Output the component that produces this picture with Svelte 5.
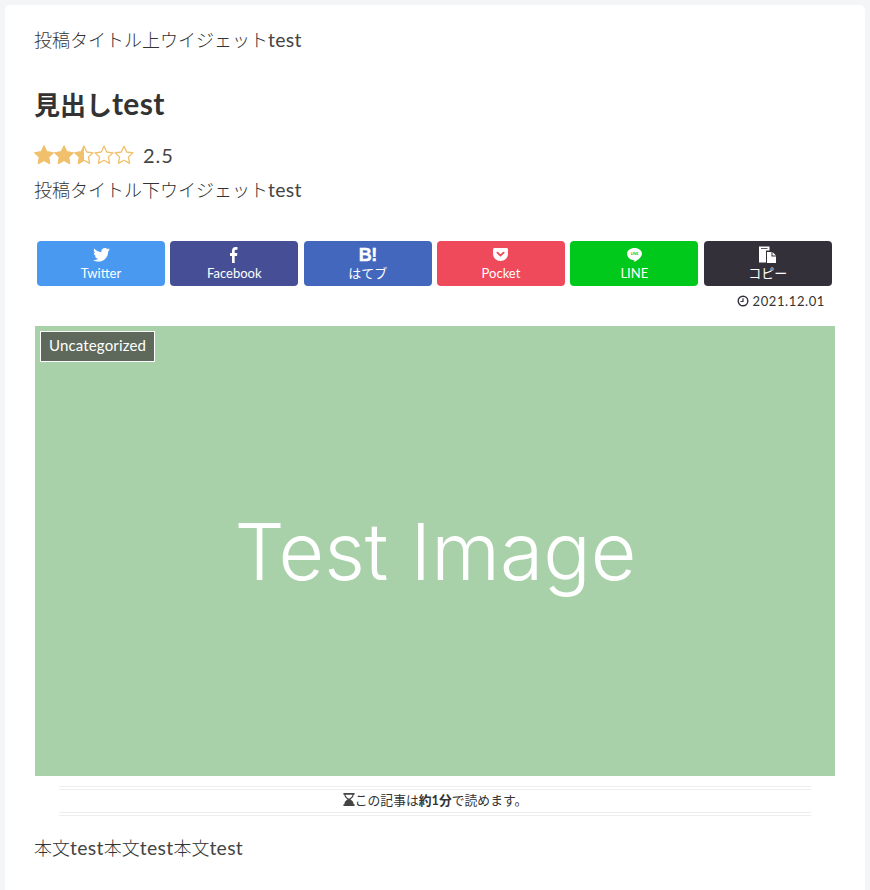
<script>
  const stars = [1, 1, 0.5, 0, 0];
  const starPath = "M10 1.2l2.7 5.8 6.3.8-4.6 4.3 1.2 6.3L10 15.3l-5.6 3.1 1.2-6.3L1 7.8l6.3-.8z";
</script>

<div class="page">
  <main class="card">
    <p class="widget top">投稿タイトル上ウイジェット<span class="lat">test</span></p>
    <h1>見出し<span class="lat">test</span></h1>
    <div class="rating">
      <span class="stars">
        {#each stars as s, i}
          <svg viewBox="0 0 20 20" width="20" height="20">
            <defs>
              <clipPath id={"half" + i}><rect x="0" y="0" width={20 * s} height="20" /></clipPath>
            </defs>
            <path d={starPath} fill="none" stroke="#f0c06c" stroke-width="1.3" stroke-linejoin="round" />
            <path d={starPath} fill="#f0c06c" stroke="#f0c06c" stroke-width="1.3" stroke-linejoin="round" clip-path={"url(#half" + i + ")"} />
          </svg>
        {/each}
      </span>
      <span class="score">2.5</span>
    </div>
    <p class="widget below">投稿タイトル下ウイジェット<span class="lat">test</span></p>

    <div class="share">
      <a class="btn twitter">
        <span class="icon">
          <svg viewBox="0 0 24 20" width="17" height="14"><path fill="#fff" d="M21.5 5c0 .2 0 .4 0 .6C21.500 12 16.600 19.400 7.600 19.400c-2.800 0-5.300-.8-7.600-2.200.4 0 .8.100 1.200.100 2.300 0 4.400-.8 6.100-2.100-2.200 0-4-1.500-4.600-3.400.3 0 .6.100.9.100.4 0 .9-.1 1.300-.2C2.700 11.200 1 9.200 1 6.800v-.1c.7.400 1.400.6 2.200.6C1.900 6.400 1 4.900 1 3.200c0-.9.200-1.700.7-2.500C4.100 3.700 7.800 5.700 11.900 5.900c-.1-.4-.1-.7-.1-1.100C11.800 2.100 14 0 16.700 0c1.400 0 2.700.6 3.600 1.500 1.100-.2 2.200-.6 3.100-1.200-.4 1.200-1.100 2.100-2.200 2.700 1-.1 2-.4 2.800-.8-.7 1-1.500 1.800-2.500 2.800z" /></svg>
        </span>
        <span class="label">Twitter</span>
      </a>
      <a class="btn facebook">
        <span class="icon">
          <svg viewBox="0 0 10 18" width="8" height="16" preserveAspectRatio="none"><path fill="#fff" d="M9.300.1v3H7.500c-1.400 0-1.600.7-1.600 1.600v2.100h3.300l-.4 3.400H5.900V18H2.500v-7.800H0V6.800h2.500V4.300C2.500 1.500 4.300 0 6.800 0c1.200 0 2 .1 2.500.1z" /></svg>
        </span>
        <span class="label">Facebook</span>
      </a>
      <a class="btn hatena">
        <span class="icon hb">B!</span>
        <span class="label">はてブ</span>
      </a>
      <a class="btn pocket">
        <span class="icon">
          <svg viewBox="0 0 16 14" width="15" height="13"><path fill="#fff" d="M1.500 0h13C15.300 0 16 .7 16 1.500V6.500c0 4.100-3.600 7.500-8 7.500s-8-3.400-8-7.500V1.500C0 .7.700 0 1.500 0z" /><path fill="none" stroke="#ef4a5b" stroke-width="2" stroke-linecap="round" stroke-linejoin="round" d="M4.700 5l3.300 3.200L11.300 5" /></svg>
        </span>
        <span class="label">Pocket</span>
      </a>
      <a class="btn line">
        <span class="icon">
          <svg viewBox="0 0 16 15" width="15" height="14"><path fill="#fff" d="M8 0c4.400 0 8 2.700 8 6.100 0 3.100-3.700 6.400-7.600 8.700-.6.300-.6-.3-.5-1.200 0-.4-.2-.6-.7-.6C3.400 12.800 0 9.900 0 6.100 0 2.700 3.600 0 8 0z" /><text x="8" y="7.700" text-anchor="middle" class="linetext">LINE</text></svg>
        </span>
        <span class="label">LINE</span>
      </a>
      <a class="btn copy">
        <span class="icon">
          <svg viewBox="0 0 17 17" width="17" height="17"><path fill="#fff" d="M0 .5h10.500v4H7v12H0z" /><path fill="#fff" d="M8 6h4.500v4.500H17V17H8z" /><path fill="#fff" d="M13.500 6l3.500 3.500h-3.500z" /><path fill="none" stroke="#33303a" stroke-width=".8" d="M2 2.500h6.500" /></svg>
        </span>
        <span class="label">コピー</span>
      </a>
    </div>

    <div class="date">
      <svg viewBox="0 0 12 12" width="12" height="12"><circle cx="6" cy="6" r="4.800" fill="none" stroke="#33303a" stroke-width="1.400" /><path d="M6 3.200V6.500H3.500" fill="none" stroke="#33303a" stroke-width="1.200" /></svg>
      <span>2021.12.01</span>
    </div>

    <figure class="hero">
      <span class="cat">Uncategorized</span>
      <span class="hero-text">Test Image</span>
    </figure>

    <div class="readtime">
      <div class="readtime-inner">
        <svg viewBox="0 0 12 14" width="12" height="13"><path fill="#444" fill-rule="evenodd" d="M0 0h12v2H11c0 2.500-1.800 4-3.500 5 1.700 1 3.500 2.500 3.500 5h1v2H0v-2h1c0-2.500 1.800-4 3.500-5C2.800 6 1 4.500 1 2H0zM2.300 2c0 1.800 1.700 3.300 3.700 4.300C8 5.300 9.700 3.800 9.700 2z" /></svg><span>この記事は<b>約1分</b>で読めます。</span>
      </div>
    </div>

    <p class="body-text">本文<span class="lat">test</span>本文<span class="lat">test</span>本文<span class="lat">test</span></p>
  </main>
</div>

<style>
  :global(body) {
    margin: 0;
    background: #f4f5f7;
    font-family: Lato, "Noto Sans CJK JP", sans-serif;
    font-weight: 300;
    color: #333;
  }
  .page {
    height: 890px;
    overflow: hidden;
    padding: 5px 5px 0;
    box-sizing: border-box;
  }
  .card {
    background: #fff;
    border-radius: 5px;
    padding: 21px 30px 0;
    height: 900px;
    box-sizing: border-box;
  }
  p {
    margin: 0;
  }
  .widget {
    font-size: 18px;
    line-height: 28px;
    color: #333;
    margin-left: -1px;
  }
  .lat {
    font-size: 19.400px;
    font-weight: 400;
    letter-spacing: 0.3px;
    color: #444;
  }
  h1 {
    margin: 31px 0 0 -1px;
    font-size: 26px;
    line-height: 36px;
    font-weight: 700;
    color: #333;
  }
  h1 .lat {
    font-size: 30px;
    font-weight: 700;
    line-height: 36px;
    color: #333;
  }
  .rating {
    display: flex;
    align-items: center;
    margin-top: 19px;
    height: 26px;
  }
  .stars {
    display: flex;
    margin-right: 9px;
    margin-left: -1px;
  }
  .stars svg {
    display: block;
  }
  .score {
    font-size: 20px;
    font-weight: 400;
    letter-spacing: 1px;
    color: #444;
  }
  .below {
    margin-top: 8px;
  }
  .share {
    display: grid;
    grid-template-columns: repeat(6, 128px);
    column-gap: 5.33px;
    padding: 0 3px 0 2px;
    margin-top: 37px;
  }
  .btn {
    height: 45px;
    border-radius: 4px;
    color: #fff;
    display: flex;
    flex-direction: column;
    align-items: center;
    font-weight: 400;
  }
  .icon {
    height: 24px;
    display: flex;
    align-items: center;
    justify-content: center;
    padding-top: 3px;
    box-sizing: border-box;
  }
  .hb {
    font-family: "Liberation Sans", sans-serif;
    font-weight: 700;
    font-size: 18px;
    letter-spacing: -0.5px;
    line-height: 1;
    -webkit-text-stroke: 0.4px #fff;
  }
  .label {
    font-size: 13px;
    line-height: 17px;
  }
  .twitter { background: #4a99f1; }
  .facebook { background: #464f96; }
  .hatena { background: #4367bc; }
  .pocket { background: #ef4a5b; }
  .line { background: #00c91c; }
  .copy { background: #33303a; }
  .linetext {
    font-size: 3.800px;
    font-weight: 700;
    fill: #00c91c;
  }
  .date {
    display: flex;
    justify-content: flex-end;
    align-items: center;
    gap: 4px;
    height: 30px;
    padding-right: 10px;
    font-size: 13px;
    letter-spacing: 0.6px;
    font-weight: 400;
    color: #333;
  }
  .hero {
    position: relative;
    margin: 10px 0 0;
    height: 450px;
    background: #a8d1aa;
    display: flex;
    align-items: center;
    justify-content: center;
  }
  .cat {
    position: absolute;
    left: 5px;
    top: 5px;
    box-sizing: border-box;
    height: 31px;
    line-height: 27px;
    padding: 0 8px;
    border: 1px solid #fff;
    background: #5e695c;
    color: #fff;
    font-size: 15px;
    font-weight: 400;
    letter-spacing: 0.15px;
  }
  .hero-text {
    font-family: Inter, sans-serif;
    font-size: 78.800px;
    font-weight: 300;
    line-height: 1;
    color: #fff;
    margin-left: 1px;
    padding-top: 3px;
  }
  .readtime {
    margin: 10px 24px 0;
    padding: 2px 0;
    border-top: 1px solid #eee;
    border-bottom: 1px solid #eee;
  }
  .readtime-inner {
    border-top: 1px solid #eee;
    border-bottom: 1px solid #eee;
    height: 24px;
    display: flex;
    justify-content: center;
    align-items: center;
    font-size: 12.800px;
    font-weight: 400;
    color: #333;
    padding-bottom: 3px;
    box-sizing: border-box;
  }
  .readtime-inner b {
    font-weight: 700;
  }
  .body-text {
    margin: 18px 0 0 -1px;
    font-size: 18px;
    line-height: 28px;
  }
</style>
